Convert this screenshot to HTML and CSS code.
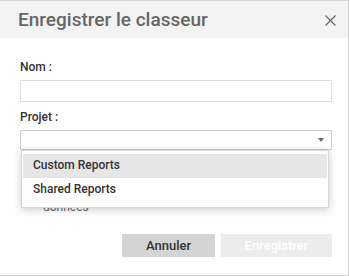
FILE: index.html
```html
<!DOCTYPE html>
<html lang="fr">
<head>
  <meta charset="UTF-8" />
  <title>Enregistrer le classeur</title>
  <link rel="stylesheet" href="styles.css">
</head>
<body>
  <div class="dialog">
    <header class="dialog-header">
      <h1>Enregistrer le classeur</h1>
      <span class="close">
        <svg width="11" height="11" viewBox="0 0 11 11"><path d="M0.5 0.5 L10.5 10.5 M10.5 0.5 L0.5 10.5" stroke="#666" stroke-width="1.2"/></svg>
      </span>
    </header>

    <div class="dialog-body">
      <label class="field-label">Nom :</label>
      <div class="text-input"></div>

      <label class="field-label">Projet :</label>
      <div class="select-wrap">
        <div class="select-box">
          <span class="arrow"></span>
        </div>
        <ul class="dropdown">
          <li class="active">Custom Reports</li>
          <li>Shared Reports</li>
        </ul>
      </div>

      <div class="check-row">
        <span class="check"></span>
        <span class="check-text">Intégrer les sources de données</span>
      </div>

      <div class="actions">
        <button class="btn btn-cancel">Annuler</button>
        <button class="btn btn-save" disabled>Enregistrer</button>
      </div>
    </div>
  </div>
</body>
</html>
```

FILE: styles.css
```css
body {
  margin: 0;
  padding: 0;
  background-color: #ffffff;
  font-family: Roboto, "Liberation Sans", sans-serif;
}
.dialog {
  width: 348px;
  height: 274px;
  border: 1px solid #d4d4d4;
  border-left: none;
  background-color: #ffffff;
  display: flex;
  flex-direction: column;
}
.dialog-header {
  height: 37px;
  flex: none;
  background-color: #f3f3f3;
  display: flex;
  align-items: center;
  justify-content: space-between;
  padding: 0 12px 0 18px;
}
.dialog-header h1 {
  margin: 0;
  font-size: 19px;
  font-weight: 500;
  color: #666666;
}
.close {
  display: flex;
  margin-top: 1px;
}
.dialog-body {
  flex: 1;
  padding: 22px 16px 18px 20px;
  display: flex;
  flex-direction: column;
}
.field-label {
  font-size: 12px;
  font-weight: 500;
  color: #333333;
  line-height: 15px;
  height: 15px;
}
.text-input {
  height: 20px;
  border: 1px solid #dcdcdc;
  margin-top: 5px;
  margin-bottom: 8px;
}
.select-wrap {
  position: relative;
  margin-top: 5px;
}
.select-box {
  height: 18px;
  border: 1px solid #cccccc;
  position: relative;
}
.arrow {
  position: absolute;
  right: 7px;
  top: 7px;
  border-left: 3px solid transparent;
  border-right: 3px solid transparent;
  border-top: 4px solid #666666;
}
.dropdown {
  position: absolute;
  left: 1px;
  top: 20px;
  width: 304px;
  margin: 0;
  padding: 3px 1px 5px 1px;
  list-style: none;
  background-color: #ffffff;
  border: 1px solid #d6d6d6;
  box-shadow: 0 2px 8px rgba(0, 0, 0, 0.2);
  z-index: 2;
}
.dropdown li {
  height: 24px;
  line-height: 22px;
  padding-left: 10px;
  font-size: 12px;
  font-weight: 500;
  color: #333333;
}
.dropdown li.active {
  background-color: #e6e6e6;
}
.check-row {
  display: flex;
  margin-top: 36px;
  padding-left: 6px;
  font-size: 12px;
  color: #666666;
}
.check {
  width: 11px;
  height: 11px;
  border: 1px solid #999;
  margin-right: 4px;
  margin-top: 1px;
  flex: none;
}
.check-text {
  width: 130px;
  line-height: 14px;
}
.actions {
  display: flex;
  justify-content: flex-end;
  gap: 6px;
  margin-top: auto;
}
.btn {
  height: 23px;
  border: none;
  font-family: Roboto, "Liberation Sans", sans-serif;
  font-size: 13px;
  font-weight: 500;
  padding: 0;
}
.btn-cancel {
  width: 93px;
  background-color: #d4d4d4;
  color: #333333;
}
.btn-save {
  width: 111px;
  background-color: #ececec;
  color: #ffffff;
}
```
